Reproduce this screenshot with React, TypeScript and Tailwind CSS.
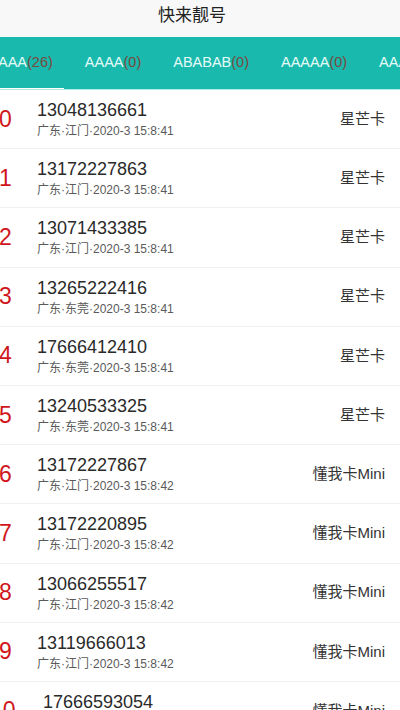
import React from "react";

const rows = [
  { n: "0", phone: "13048136661", loc: "广东·江门·2020-3 15:8:41", card: "星芒卡" },
  { n: "1", phone: "13172227863", loc: "广东·江门·2020-3 15:8:41", card: "星芒卡" },
  { n: "2", phone: "13071433385", loc: "广东·江门·2020-3 15:8:41", card: "星芒卡" },
  { n: "3", phone: "13265222416", loc: "广东·东莞·2020-3 15:8:41", card: "星芒卡" },
  { n: "4", phone: "17666412410", loc: "广东·东莞·2020-3 15:8:41", card: "星芒卡" },
  { n: "5", phone: "13240533325", loc: "广东·东莞·2020-3 15:8:41", card: "星芒卡" },
  { n: "6", phone: "13172227867", loc: "广东·江门·2020-3 15:8:42", card: "懂我卡Mini" },
  { n: "7", phone: "13172220895", loc: "广东·江门·2020-3 15:8:42", card: "懂我卡Mini" },
  { n: "8", phone: "13066255517", loc: "广东·江门·2020-3 15:8:42", card: "懂我卡Mini" },
  { n: "9", phone: "13119666013", loc: "广东·江门·2020-3 15:8:42", card: "懂我卡Mini" },
  { n: "10", phone: "17666593054", loc: "广东·江门·2020-3 15:8:42", card: "懂我卡Mini" },
];

const tabs = [
  { label: "AAA", count: "(26)", active: true },
  { label: "AAAA", count: "(0)" },
  { label: "ABABAB", count: "(0)" },
  { label: "AAAAA", count: "(0)" },
  { label: "AAAAAA", count: "(0)" },
];

export default function App() {
  return (
    <div
      className="w-[400px] h-[710px] overflow-hidden bg-white"
      style={{ fontFamily: '"Liberation Sans", "Noto Sans CJK SC", sans-serif' }}
    >
      <div className="h-[37px] bg-[#f8f8f8] flex items-center justify-center text-[17px] text-[#222] pb-[6px] pr-[16px]">
        快来靓号
      </div>
      <div className="h-[53px] bg-[#19b9ad] border-b border-[#aeeae6] flex items-stretch overflow-hidden whitespace-nowrap">
        {tabs.map((t, i) => (
          <div
            key={i}
            className={
              "relative flex items-center shrink-0 text-[14.5px] " +
              (i === 0 ? "ml-[-2px] pl-0 pr-[16px]" : "px-[16px]")
            }
          >
            <span className="text-[#e6fbf8]">{t.label}</span>
            <span className="text-[#7a4a3f]">{t.count}</span>
            {t.active && (
              <div className="absolute left-0 bottom-[-1px] h-[2px] w-[66px] bg-white" />
            )}
          </div>
        ))}
      </div>
      <div>
        {rows.map((r, i) => (
          <div
            key={i}
            className="h-[59.2px] flex items-center border-b border-[#efefef]"
          >
            <div
              className={
                "text-[23px] text-[#d0161c] leading-none shrink-0 " +
                (r.n.length > 1 ? "ml-[-10px] w-[53px]" : "ml-[-1px] w-[38px]")
              }
            >
              {r.n}
            </div>
            <div className="flex-1 flex flex-col">
              <div className="text-[18px] text-[#2a2a2a] leading-[22px]">{r.phone}</div>
              <div className="text-[12px] text-[#5a5a5a] leading-[16px] mt-[2px]">{r.loc}</div>
            </div>
            <div className="text-[15px] text-[#333] pr-[15px]">{r.card}</div>
          </div>
        ))}
      </div>
    </div>
  );
}
